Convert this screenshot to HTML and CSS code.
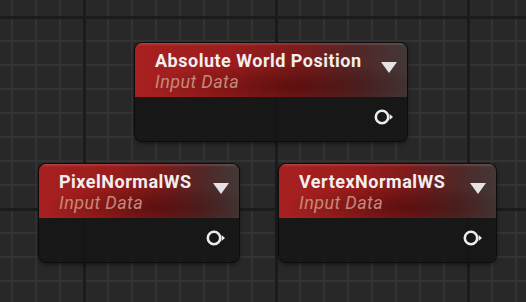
FILE: index.html
```html
<!DOCTYPE html>
<html>
<head>
<meta charset="utf-8">
<link rel="stylesheet" href="styles.css">
</head>
<body>
<div class="canvas">
  <div class="node node-a">
    <div class="node-header">
      <div class="titles">
        <div class="title">Absolute World Position</div>
        <div class="subtitle">Input Data</div>
      </div>
      <span class="dropdown"></span>
    </div>
    <div class="node-body">
      <svg class="pin" width="20" height="18" viewBox="0 0 20 18"><circle cx="8" cy="9" r="6.2" fill="none" stroke="#ececec" stroke-width="2.6"/><path d="M15.6 6 L19 9 L15.6 12 Z" fill="#ececec"/></svg>
    </div>
  </div>
  <div class="node node-b">
    <div class="node-header">
      <div class="titles">
        <div class="title">PixelNormalWS</div>
        <div class="subtitle">Input Data</div>
      </div>
      <span class="dropdown"></span>
    </div>
    <div class="node-body">
      <svg class="pin" width="20" height="18" viewBox="0 0 20 18"><circle cx="8" cy="9" r="6.2" fill="none" stroke="#ececec" stroke-width="2.6"/><path d="M15.6 6 L19 9 L15.6 12 Z" fill="#ececec"/></svg>
    </div>
  </div>
  <div class="node node-c">
    <div class="node-header">
      <div class="titles">
        <div class="title">VertexNormalWS</div>
        <div class="subtitle">Input Data</div>
      </div>
      <span class="dropdown"></span>
    </div>
    <div class="node-body">
      <svg class="pin" width="20" height="18" viewBox="0 0 20 18"><circle cx="8" cy="9" r="6.2" fill="none" stroke="#ececec" stroke-width="2.6"/><path d="M15.6 6 L19 9 L15.6 12 Z" fill="#ececec"/></svg>
    </div>
  </div>
</div>
</body>
</html>
```

FILE: styles.css
```css
html, body {
  margin: 0;
  padding: 0;
}
body {
  width: 526px;
  height: 302px;
  overflow: hidden;
  background-color: #282828;
  background-image:
    linear-gradient(to right, #1b1b1b 3px, transparent 3px),
    linear-gradient(to bottom, #1b1b1b 3px, transparent 3px),
    linear-gradient(to right, #333333 2px, transparent 2px),
    linear-gradient(to bottom, #333333 2px, transparent 2px);
  background-size: 192px 100%, 100% 192px, 24px 24px, 24px 24px;
  background-position: 83px 0, 0 16px, 11px 0, 0 16px;
  font-family: Roboto, "Liberation Sans", sans-serif;
}
.canvas {
  position: relative;
  width: 526px;
  height: 302px;
}
.node {
  position: absolute;
  display: flex;
  flex-direction: column;
  border-radius: 7px;
  box-shadow: 0 0 0 1px #0c0c0c, 0 2px 5px rgba(0, 0, 0, 0.55);
  overflow: hidden;
}
.node-a { left: 135px; top: 43px; width: 272px; }
.node-b { left: 39px; top: 164px; width: 200px; }
.node-c { left: 279px; top: 164px; width: 217px; }

.node-header {
  height: 54px;
  box-sizing: border-box;
  padding: 8px 10px 0 20px;
  display: flex;
  justify-content: space-between;
  align-items: flex-start;
  background:
    linear-gradient(to bottom, rgba(255, 255, 255, 0.16) 0, rgba(255, 255, 255, 0) 3px),
    radial-gradient(ellipse 55% 45% at 58% 80%, rgba(50, 0, 0, 0.45), rgba(50, 0, 0, 0) 100%),
    linear-gradient(to right, #a82020 0%, #9c1d1d 35%, #7e1b1b 60%, #522727 82%, #433838 100%);
}
.titles {
  display: flex;
  flex-direction: column;
  gap: 1px;
}
.title {
  font-size: 18px;
  line-height: 20px;
  font-weight: 700;
  letter-spacing: 0.5px;
  color: #f2eeee;
  white-space: nowrap;
}
.subtitle {
  font-size: 18px;
  line-height: 20px;
  font-style: italic;
  letter-spacing: 0.4px;
  color: #c4897b;
  white-space: nowrap;
}
.dropdown {
  width: 0;
  height: 0;
  margin-top: 11px;
  border-left: 8px solid transparent;
  border-right: 8px solid transparent;
  border-top: 11px solid #e4e4e4;
}
.node-body {
  height: 44px;
  box-sizing: border-box;
  padding: 11px 13px 0 0;
  display: flex;
  justify-content: flex-end;
  align-items: flex-start;
  background: rgba(19, 20, 19, 0.88);
}
.pin {
  display: block;
}
```
